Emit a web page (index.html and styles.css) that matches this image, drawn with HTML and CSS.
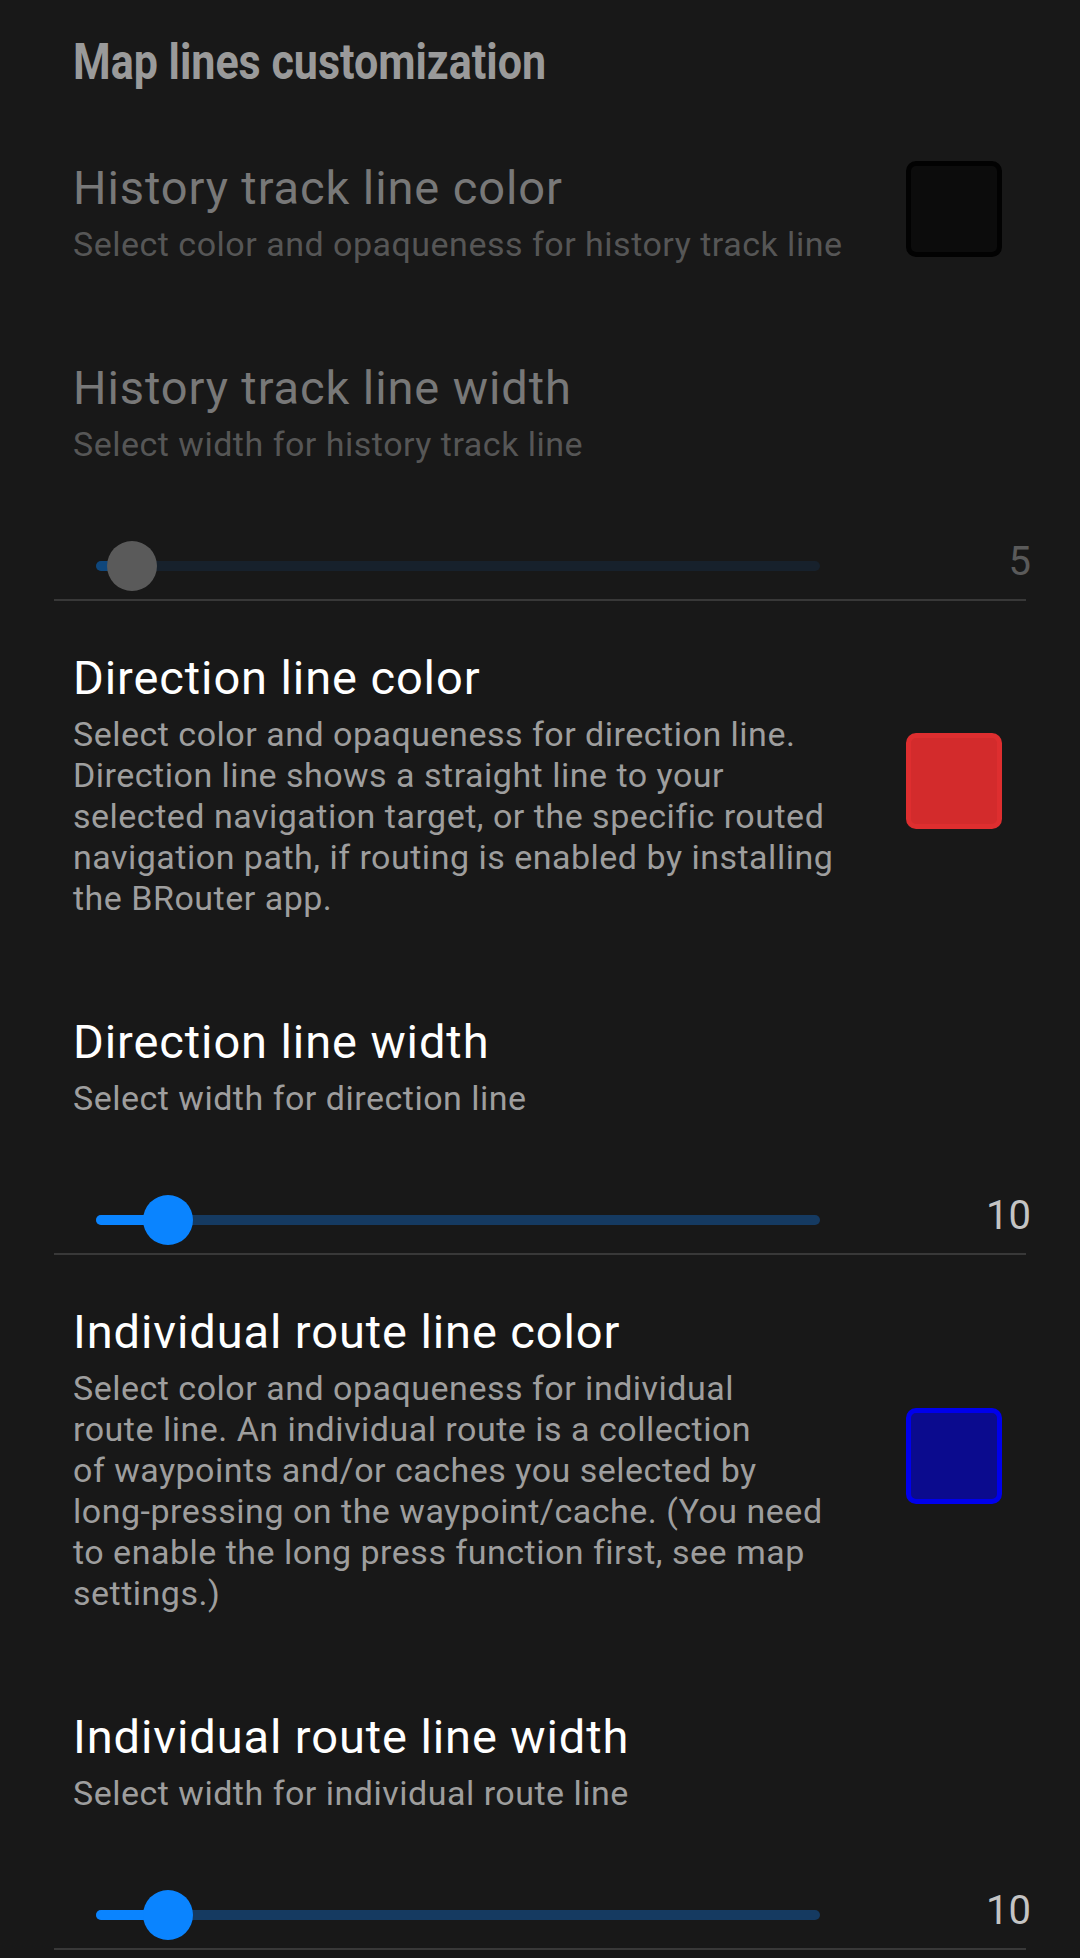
FILE: index.html
```html
<!DOCTYPE html>
<html>
<head>
<meta charset="utf-8">
<link rel="stylesheet" href="styles.css">
</head>
<body>
<div class="screen">
  <div class="category"><span class="category-text">Map lines customization</span></div>

  <div class="pref pref-color disabled pref-first">
    <div class="pref-text">
      <div class="pref-title">History track line color</div>
      <div class="pref-summary">Select color and opaqueness for history track line</div>
    </div>
    <div class="swatch swatch-black"></div>
  </div>

  <div class="pref pref-slider disabled">
    <div class="pref-text">
      <div class="pref-title">History track line width</div>
      <div class="pref-summary">Select width for history track line</div>
    </div>
    <div class="slider-row">
      <div class="slider">
        <div class="track"><div class="track-active" style="width:36px"></div></div>
        <div class="thumb" style="left:36px"></div>
      </div>
      <div class="slider-value">5</div>
    </div>
  </div>
  <div class="divider"></div>

  <div class="pref pref-color">
    <div class="pref-text">
      <div class="pref-title">Direction line color</div>
      <div class="pref-summary">Select color and opaqueness for direction line.<br>Direction line shows a straight line to your<br>selected navigation target, or the specific routed<br>navigation path, if routing is enabled by installing<br>the BRouter app.</div>
    </div>
    <div class="swatch swatch-red"></div>
  </div>

  <div class="pref pref-slider">
    <div class="pref-text">
      <div class="pref-title">Direction line width</div>
      <div class="pref-summary">Select width for direction line</div>
    </div>
    <div class="slider-row">
      <div class="slider">
        <div class="track"><div class="track-active" style="width:72px"></div></div>
        <div class="thumb" style="left:72px"></div>
      </div>
      <div class="slider-value">10</div>
    </div>
  </div>
  <div class="divider"></div>

  <div class="pref pref-color">
    <div class="pref-text">
      <div class="pref-title">Individual route line color</div>
      <div class="pref-summary">Select color and opaqueness for individual<br>route line. An individual route is a collection<br>of waypoints and/or caches you selected by<br>long-pressing on the waypoint/cache. (You need<br>to enable the long press function first, see map<br>settings.)</div>
    </div>
    <div class="swatch swatch-blue"></div>
  </div>

  <div class="pref pref-slider">
    <div class="pref-text">
      <div class="pref-title">Individual route line width</div>
      <div class="pref-summary">Select width for individual route line</div>
    </div>
    <div class="slider-row">
      <div class="slider">
        <div class="track"><div class="track-active" style="width:72px"></div></div>
        <div class="thumb" style="left:72px"></div>
      </div>
      <div class="slider-value">10</div>
    </div>
  </div>
  <div class="divider"></div>
</div>
</body>
</html>
```

FILE: styles.css
```css
html, body {
  margin: 0;
  padding: 0;
  background: #181818;
}

.screen {
  width: 1080px;
  height: 1958px;
  overflow: hidden;
  background: #181818;
  font-family: Roboto, "Noto Sans", "Liberation Sans", sans-serif;
}

.category {
  padding: 33px 0 0 73px;
  height: 59px;
  line-height: 59px;
  font-size: 50px;
  font-weight: 700;
  color: #9a9a9a;
  white-space: nowrap;
}

.category-text {
  display: inline-block;
  transform: scaleX(0.86);
  transform-origin: left center;
}

.pref {
  padding: 48px 78px 48px 73px;
}

.pref-first {
  padding-top: 69px;
}

.pref-color {
  display: flex;
  align-items: center;
}

.pref-text {
  flex: 1;
  min-width: 0;
}

.pref-title {
  font-size: 47px;
  line-height: 54px;
  letter-spacing: 0.9px;
  color: #ffffff;
  white-space: nowrap;
}

.pref-summary {
  margin-top: 9px;
  font-size: 34px;
  line-height: 41px;
  letter-spacing: 0.5px;
  color: #9e9e9e;
  white-space: nowrap;
}

.disabled .pref-title {
  color: #787878;
}

.disabled .pref-summary {
  color: #565656;
}

.swatch {
  width: 96px;
  height: 96px;
  box-sizing: border-box;
  border-radius: 10px;
  border: 5px solid;
  margin-bottom: 8px;
  flex: none;
}

.swatch-black {
  background: #0c0c0c;
  border-color: #020202;
}

.swatch-red {
  background: #d32b2c;
  border-color: #de2e2f;
}

.swatch-blue {
  background: #0b0b8e;
  border-color: #0000ec;
}

.pref-slider {
  padding: 48px 0 8px 0;
}

.pref-slider .pref-text {
  padding: 0 78px 0 73px;
}

.slider-row {
  margin-top: 76px;
  height: 50px;
  display: flex;
  align-items: center;
}

.slider {
  position: relative;
  margin-left: 71px;
  width: 774px;
  height: 50px;
  flex: none;
}

.track {
  margin: 20px 25px 0 25px;
  height: 10px;
  border-radius: 5px;
  background: #153a61;
  overflow: hidden;
}

.track-active {
  height: 100%;
  background: #0a84ff;
}

.thumb {
  position: absolute;
  top: 0;
  width: 50px;
  height: 50px;
  border-radius: 50%;
  background: #0a84ff;
}

.disabled .track {
  background: #17212c;
}

.disabled .track-active {
  background: #0f477c;
}

.disabled .thumb {
  background: #5a5a5a;
}

.slider-value {
  flex: 1;
  text-align: right;
  padding-right: 49px;
  font-size: 40px;
  line-height: 40px;
  margin-bottom: 8px;
  color: #c4c4c4;
}

.disabled .slider-value {
  color: #5a5a5a;
}

.divider {
  height: 2px;
  margin: 0 54px;
  background: #383838;
}

.divider + .pref {
  padding-top: 50px;
}
```
